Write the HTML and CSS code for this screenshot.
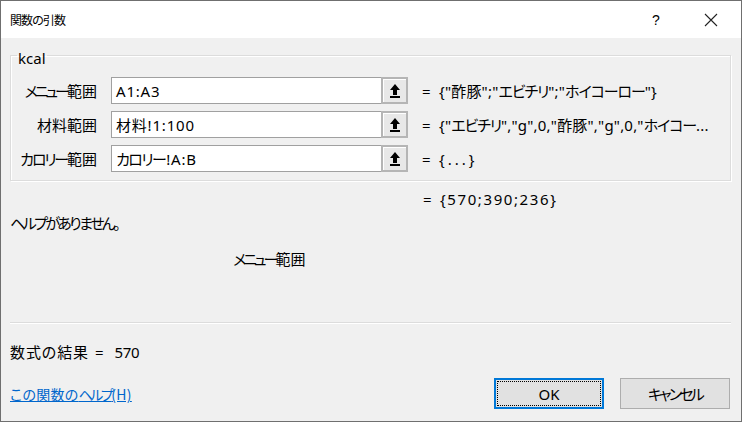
FILE: index.html
```html
<!DOCTYPE html>
<html lang="ja">
<head>
<meta charset="utf-8">
<link rel="stylesheet" href="styles.css">
</head>
<body>
<div class="win">
  <div class="titlebar">
    <span class="title">関数の引数</span>
    <span class="tb-help">?</span>
    <span class="tb-close"><svg width="14" height="14" viewBox="0 0 14 14"><path d="M1 1L13 13M13 1L1 13" stroke="#222" stroke-width="1.1" fill="none"/></svg></span>
  </div>
  <div class="body">
    <fieldset class="group">
      <legend>kcal</legend>
      <div class="row">
        <label class="lbl"><span class="kn">メニュー</span>範囲</label>
        <div class="field"><span class="val">A1:A3</span></div>
        <div class="refbtn"><svg width="12" height="16" viewBox="0 0 12 16"><path d="M6 1L11 7H8V12H4V7H1Z" fill="#000"/><rect x="1" y="13" width="10" height="2" fill="#000"/></svg></div>
        <span class="eq">=</span>
        <span class="res">{"酢豚";"<span class="kn2">エビチリ</span>";"<span class="kn2">ホイコーロー</span>"}</span>
      </div>
      <div class="row">
        <label class="lbl">材料範囲</label>
        <div class="field"><span class="val">材料!1:100</span></div>
        <div class="refbtn"><svg width="12" height="16" viewBox="0 0 12 16"><path d="M6 1L11 7H8V12H4V7H1Z" fill="#000"/><rect x="1" y="13" width="10" height="2" fill="#000"/></svg></div>
        <span class="eq">=</span>
        <span class="res">{"<span class="kn2">エビチリ</span>","g",0,"酢豚","g",0,"<span class="kn2">ホイコー</span>...</span>
      </div>
      <div class="row">
        <label class="lbl"><span class="kn3">カロリー</span>範囲</label>
        <div class="field"><span class="val"><span class="kf">カロリー</span>!A:B</span></div>
        <div class="refbtn"><svg width="12" height="16" viewBox="0 0 12 16"><path d="M6 1L11 7H8V12H4V7H1Z" fill="#000"/><rect x="1" y="13" width="10" height="2" fill="#000"/></svg></div>
        <span class="eq">=</span>
        <span class="res dots">{...}</span>
      </div>
    </fieldset>
    <div class="total"><span class="eq">=</span><span class="res">{570;390;236}</span></div>
    <div class="help"><span class="kh">ヘルプがありません。</span></div>
    <div class="argname"><span class="kn">メニュー</span>範囲</div>
    <div class="sep"></div>
    <div class="result"><span class="r-lbl">数式の結果</span><span class="r-eq">=</span><span class="r-val">570</span></div>
    <div class="footer">
      <a class="link" href="#">この関数の<span class="kn1">ヘルプ</span>(H)</a>
      <div class="btns">
        <button class="btn ok"><span class="focus">OK</span></button>
        <button class="btn"><span class="kc">キャンセル</span></button>
      </div>
    </div>
  </div>
</div>
</body>
</html>
```
FILE: styles.css
```css
* { box-sizing: border-box; }
html, body { margin: 0; padding: 0; }
body {
  width: 742px; height: 422px; overflow: hidden;
  font-family: "Noto Sans CJK JP", "Noto Sans", sans-serif;
  font-feature-settings: "palt";
  font-size: 15px; line-height: 20px; color: #000;
}
.win {
  width: 742px; height: 422px;
  border: 1px solid #6f6f6f;
  background: #f0f0f0;
  display: flex; flex-direction: column;
}
.titlebar {
  height: 37px; flex: none; background: #fff;
  display: flex; align-items: center;
  padding-left: 9px;
}
.title { font-size: 12px; letter-spacing: -0.9px; flex: 1; }
.tb-help { width: 20px; text-align: center; font-size: 14px; margin-right: 38px; font-family: "Liberation Sans", sans-serif; }
.tb-close { width: 14px; height: 14px; margin-right: 23px; display: flex; }
.body { flex: 1; padding: 0 11px 0 9px; }
.group {
  margin: 6px 0 0 0; padding: 11px 0 8px 0;
  border: 1px solid #dcdcdc;
  box-shadow: inset 1px 1px 0 #fff, 1px 1px 0 #fff;
  width: 721px;
}
.group legend {
  padding: 6px 1px 0 1px; margin-left: 6px;
  font-size: 15px; line-height: 16px;
  font-family: "Noto Sans", sans-serif;
}
.kn { letter-spacing: -3px; }
.kn1 { letter-spacing: -2.5px; }
.kn2 { letter-spacing: -1.1px; }
.kn3 { letter-spacing: -2.2px; }
.kh { letter-spacing: -2.6px; }
.kf { letter-spacing: -1.6px; margin-right: 1px; }
.kc { letter-spacing: -2.8px; }
.row { display: flex; align-items: center; height: 27px; }
.row + .row { margin-top: 7px; }
.lbl { width: 86px; flex: none; text-align: right; white-space: nowrap; }
.field {
  margin-left: 14px; width: 270px; height: 27px; flex: none;
  background: #fff; border: 1px solid #a0a0a0; border-right: none;
  display: flex; align-items: center; padding-left: 4px;
  font-size: 15px;
}
.val { font-family: "Noto Sans", "Noto Sans CJK JP", sans-serif; letter-spacing: 0.8px; white-space: nowrap; }
.refbtn {
  width: 27px; height: 27px; flex: none;
  border: 2px solid #b5b5b5; background: #e8e8e8;
  box-shadow: inset 1px 1px 0 #fff;
  display: flex; align-items: center; justify-content: center;
}
.eq { margin-left: 14px; width: 17px; flex: none; font-size: 15px; font-family: "Noto Sans", sans-serif; }
.res { font-size: 15px; white-space: nowrap; letter-spacing: 0.2px; font-family: "Noto Sans", "Noto Sans CJK JP", sans-serif; }
.res.dots { letter-spacing: 3px; }
.total { display: flex; align-items: center; height: 20px; margin-top: 8px; padding-left: 413px; }
.total .eq { margin-left: 0; }
.total .res { letter-spacing: 1.6px; }
.help { margin-top: 4px; }
.argname { margin-top: 16px; padding-left: 223px; }
.sep {
  margin-top: 53px; height: 2px; width: 721px;
  border-top: 1px solid #dcdcdc; border-bottom: 1px solid #fff;
}
.result { margin-top: 18px; display: flex; }
.r-lbl { letter-spacing: 0.9px; }
.r-eq { margin-left: 6px; font-family: "Noto Sans", sans-serif; font-size: 15px; }
.r-val { margin-left: 11px; font-family: "Noto Sans", sans-serif; font-size: 15px; letter-spacing: -0.3px; }
.footer { display: flex; align-items: center; justify-content: space-between; margin-top: 16px; }
.link { color: #0066cc; text-decoration: underline; font-size: 14px; margin-top: 1px; letter-spacing: 0.3px; }
.btns { display: flex; gap: 16px; }
.btn {
  width: 110px; height: 31px;
  border: 1px solid #adadad; background: #e1e1e1;
  font-family: "Noto Sans CJK JP", sans-serif; font-feature-settings: "palt";
  font-size: 15px; padding: 0; color: #000;
}
.btn.ok { border: 2px solid #0078d7; padding: 1px; }
.focus {
  display: flex; align-items: center; justify-content: center;
  width: 100%; height: 100%;
  border: 1px dotted #000;
  font-family: "Noto Sans", sans-serif; font-size: 15px;
}
```
